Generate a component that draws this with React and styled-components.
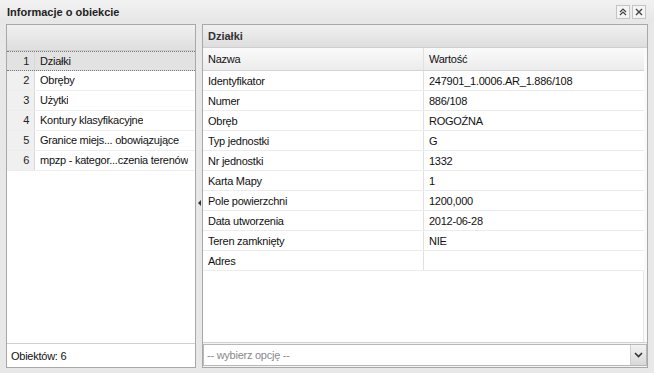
import React from 'react'
import styled, { createGlobalStyle } from 'styled-components'

const Global = createGlobalStyle`
  html, body { margin: 0; padding: 0; background: #e6e6e6; }
  body { font-family: "Liberation Sans", Tahoma, Arial, sans-serif; font-size: 11px; color: #111; }
`

const Window = styled.div`
  width: 654px;
  height: 373px;
  display: flex;
  flex-direction: column;
  background: #e8e8e8;
  box-sizing: border-box;
  overflow: hidden;
`

const TitleBar = styled.div`
  height: 23px;
  display: flex;
  align-items: center;
  padding: 0 8px 0 7px;
  background: linear-gradient(#f2f2f2, #e6e6e6);
`

const Title = styled.div`
  flex: 1;
  font-weight: bold;
  font-size: 11px;
  color: #222;
`

const Tool = styled.div`
  width: 12px;
  height: 12px;
  border: 1px solid #c4c4c4;
  background: #f4f4f4;
  margin-left: 2px;
  display: flex;
  align-items: center;
  justify-content: center;
`

const Body = styled.div`
  flex: 1;
  display: flex;
  padding: 1px 6px 5px 6px;
  min-height: 0;
  letter-spacing: -0.25px;
`

const Panel = styled.div`
  display: flex;
  flex-direction: column;
  border: 1px solid #a8a8a8;
  background: #fff;
  box-sizing: border-box;
  ${p => p.$width ? `width: ${p.$width}px;` : 'flex: 1;'}
`

const PanelHeader = styled.div`
  height: ${p => p.$tall ? 25 : 22}px;
  flex: none;
  display: flex;
  align-items: center;
  padding-left: 5px;
  font-weight: bold;
  letter-spacing: 0;
  color: #333;
  background: linear-gradient(#f0f0f0, #dedede);
  border-bottom: 1px solid #cfcfcf;
`

const List = styled.div`
  flex: 1;
`

const ListRow = styled.div`
  display: flex;
  height: 20px;
  box-sizing: border-box;
  border-bottom: 1px ${p => p.$selected ? 'dotted #777' : 'solid #ededed'};
  border-top: ${p => p.$selected ? '1px dotted #777' : 'none'};
  background: ${p => p.$selected ? '#e2e2e2' : '#fff'};
`

const RowNum = styled.div`
  width: 28px;
  flex: none;
  text-align: right;
  padding-right: 5px;
  box-sizing: border-box;
  line-height: 19px;
  color: #222;
  background: ${p => p.$selected ? '#e2e2e2' : '#f0f0f0'};
  border-right: 1px solid #d8d8d8;
`

const RowText = styled.div`
  padding-left: 5px;
  line-height: 19px;
  white-space: nowrap;
  overflow: hidden;
`

const Footer = styled.div`
  height: 23px;
  flex: none;
  display: flex;
  align-items: center;
  padding-left: 4px;
  border-top: 1px solid #d0d0d0;
`

const Splitter = styled.div`
  width: 6px;
  flex: none;
  display: flex;
  align-items: center;
  justify-content: center;
  padding-top: 14px;
`

const Arrow = styled.div`
  width: 0;
  height: 0;
  border-top: 3px solid transparent;
  border-bottom: 3px solid transparent;
  border-right: 3px solid #333;
`

const Grid = styled.div`
  flex: 1;
  display: flex;
  flex-direction: column;
  border-right: 3px solid #fafafa;
  box-shadow: inset -1px 0 0 #e6e6e6;
`

const GridRow = styled.div`
  display: flex;
  height: 20px;
  flex: none;
  box-sizing: border-box;
  border-bottom: 1px solid #ececec;
  background: ${p => p.$head ? 'linear-gradient(#fafafa, #ececec)' : '#fff'};
  ${p => p.$head && 'border-bottom-color: #d4d4d4; height: 23px;'}
`

const Cell = styled.div`
  box-sizing: border-box;
  ${p => p.$first ? 'width: 221px; flex: none; border-right: 1px solid #e0e0e0;' : 'flex: 1;'}
  padding-left: 5px;
  display: flex;
  align-items: center;
  white-space: nowrap;
`

const ComboRow = styled.div`
  height: 25px;
  flex: none;
  border-top: 1px solid #d0d0d0;
  background: #f4f4f4;
  padding: 1px 0 0 0;
  box-sizing: border-box;
`

const Combo = styled.div`
  height: 22px;
  display: flex;
  border: 1px solid #b8b8b8;
  background: #fff;
  box-sizing: border-box;
`

const ComboText = styled.div`
  flex: 1;
  color: #8a8a8a;
  padding-left: 3px;
  display: flex;
  align-items: center;
`

const ComboBtn = styled.div`
  width: 15px;
  background: linear-gradient(#f2f2f2, #d8d8d8);
  border-left: 1px solid #cfcfcf;
  display: flex;
  align-items: center;
  justify-content: center;
`

const layers = ['Działki', 'Obręby', 'Użytki', 'Kontury klasyfikacyjne', 'Granice miejs... obowiązujące', 'mpzp - kategor...czenia terenów']

const attrs = [
  ['Identyfikator', '247901_1.0006.AR_1.886/108'],
  ['Numer', '886/108'],
  ['Obręb', 'ROGOŹNA'],
  ['Typ jednostki', 'G'],
  ['Nr jednostki', '1332'],
  ['Karta Mapy', '1'],
  ['Pole powierzchni', '1200,000'],
  ['Data utworzenia', '2012-06-28'],
  ['Teren zamknięty', 'NIE'],
  ['Adres', ''],
]

export default function App() {
  return (
    <Window>
      <Global />
      <TitleBar>
        <Title>Informacje o obiekcie</Title>
        <Tool>
          <svg width="8" height="8" viewBox="0 0 8 8">
            <path d="M1 4 L4 1 L7 4 M1 7 L4 4 L7 7" fill="none" stroke="#444" strokeWidth="1.2" />
          </svg>
        </Tool>
        <Tool>
          <svg width="8" height="8" viewBox="0 0 8 8">
            <path d="M1 1 L7 7 M7 1 L1 7" stroke="#444" strokeWidth="1.4" />
          </svg>
        </Tool>
      </TitleBar>
      <Body>
        <Panel $width={190}>
          <PanelHeader $tall />
          <List>
            {layers.map((l, i) => (
              <ListRow key={l} $selected={i === 0}>
                <RowNum $selected={i === 0}>{i + 1}</RowNum>
                <RowText>{l}</RowText>
              </ListRow>
            ))}
          </List>
          <Footer>Obiektów: 6</Footer>
        </Panel>
        <Splitter><Arrow /></Splitter>
        <Panel>
          <PanelHeader>Działki</PanelHeader>
          <Grid>
            <GridRow $head>
              <Cell $first>Nazwa</Cell>
              <Cell>Wartość</Cell>
            </GridRow>
            {attrs.map(([k, v]) => (
              <GridRow key={k}>
                <Cell $first>{k}</Cell>
                <Cell>{v}</Cell>
              </GridRow>
            ))}
          </Grid>
          <ComboRow>
            <Combo>
              <ComboText>-- wybierz opcję --</ComboText>
              <ComboBtn>
                <svg width="9" height="6" viewBox="0 0 9 6">
                  <path d="M1 1 L4.5 4.5 L8 1" fill="none" stroke="#333" strokeWidth="1.6" />
                </svg>
              </ComboBtn>
            </Combo>
          </ComboRow>
        </Panel>
      </Body>
    </Window>
  )
}
